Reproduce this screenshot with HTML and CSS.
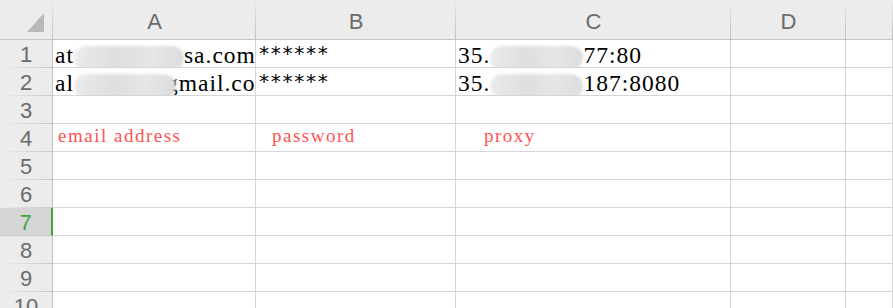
FILE: index.html
```html
<!DOCTYPE html>
<html lang="en">
<head>
  <meta charset="UTF-8">
  <title>Sheet1</title>
  <link rel="stylesheet" href="styles.css">
</head>
<body>

<div class="sheet">
  <div class="corner">
    <svg width="18" height="20" viewBox="0 0 18 20"><polygon points="17,0 17,19 0,19" fill="#b9b9b9"/></svg>
  </div>
  <div class="col-head">A</div>
  <div class="col-head">B</div>
  <div class="col-head">C</div>
  <div class="col-head">D</div>
  <div class="col-head"></div>

  <div class="row-head">1</div>
  <div class="cell">at<span class="blot blot-a1"></span>sa.com</div>
  <div class="cell stars">******</div>
  <div class="cell">35.<span class="blot blot-c1"></span>77:80</div>
  <div class="cell"></div>
  <div class="cell"></div>

  <div class="row-head">2</div>
  <div class="cell">al<span class="blot blot-a2"></span>gmail.com</div>
  <div class="cell stars">******</div>
  <div class="cell">35.<span class="blot blot-c2"></span>187:8080</div>
  <div class="cell"></div>
  <div class="cell"></div>

  <div class="row-head">3</div>
  <div class="cell"></div>
  <div class="cell"></div>
  <div class="cell"></div>
  <div class="cell"></div>
  <div class="cell"></div>

  <div class="row-head">4</div>
  <div class="cell note indent-a">email address</div>
  <div class="cell note indent-b">password</div>
  <div class="cell note indent-c">proxy</div>
  <div class="cell"></div>
  <div class="cell"></div>

  <div class="row-head">5</div>
  <div class="cell"></div>
  <div class="cell"></div>
  <div class="cell"></div>
  <div class="cell"></div>
  <div class="cell"></div>

  <div class="row-head">6</div>
  <div class="cell"></div>
  <div class="cell"></div>
  <div class="cell"></div>
  <div class="cell"></div>
  <div class="cell"></div>

  <div class="row-head active">7</div>
  <div class="cell"></div>
  <div class="cell"></div>
  <div class="cell"></div>
  <div class="cell"></div>
  <div class="cell"></div>

  <div class="row-head">8</div>
  <div class="cell"></div>
  <div class="cell"></div>
  <div class="cell"></div>
  <div class="cell"></div>
  <div class="cell"></div>

  <div class="row-head">9</div>
  <div class="cell"></div>
  <div class="cell"></div>
  <div class="cell"></div>
  <div class="cell"></div>
  <div class="cell"></div>

  <div class="row-head">10</div>
  <div class="cell"></div>
  <div class="cell"></div>
  <div class="cell"></div>
  <div class="cell"></div>
  <div class="cell"></div>
</div>

</body>
</html>
```

FILE: styles.css
```css
body {
  margin: 0;
  background-color: #fff;
  overflow: hidden;
}

.sheet {
  display: grid;
  grid-template-columns: 53px 203px 200px 275px 115px 1fr;
  grid-template-rows: 40px repeat(10, 28px);
  width: 893px;
  height: 308px;
  overflow: hidden;
}

.corner {
  background: linear-gradient(#ececec, #c2c2c2) right / 1px 100% no-repeat, #ececec;
  border-bottom: 1px solid #c2c2c2;
  box-sizing: border-box;
  display: flex;
  justify-content: flex-end;
  align-items: flex-end;
  padding: 0 8px 6px 0;
}

.corner svg {
  display: block;
}

.col-head {
  background: linear-gradient(#ececec, #bcbcbc) right / 1px 100% no-repeat, #ececec;
  border-bottom: 1px solid #c2c2c2;
  box-sizing: border-box;
  display: flex;
  justify-content: center;
  align-items: center;
  padding-top: 4px;
  font-family: "Liberation Sans", Arial, sans-serif;
  font-size: 22px;
  color: #6b6b6b;
}

.row-head {
  background: linear-gradient(to right, #ececec, #c8c8c8) bottom / 100% 1px no-repeat, #ececec;
  border-right: 1px solid #c2c2c2;
  box-sizing: border-box;
  display: flex;
  justify-content: center;
  align-items: center;
  padding-top: 2px;
  font-family: "Liberation Sans", Arial, sans-serif;
  font-size: 22px;
  color: #6b6b6b;
}

.row-head.active {
  background-color: #d6d6d6;
  background-image: none;
  border-bottom: 1px solid #c8c8c8;
  border-right: 2px solid #3ea83e;
  color: #3ea83e;
}

.cell {
  border-right: 1px solid #d6d6d6;
  border-bottom: 1px solid #d6d6d6;
  box-sizing: border-box;
  display: flex;
  align-items: flex-end;
  padding: 0 0 0 2px;
  overflow: hidden;
  white-space: nowrap;
  font-family: "Liberation Serif", "Times New Roman", serif;
  font-size: 23.5px;
  line-height: 24px;
  letter-spacing: 1px;
  color: #000;
}

.stars {
  font-family: "DejaVu Sans Mono", monospace;
  font-size: 20px;
  letter-spacing: -0.3px;
  padding-bottom: 2px;
}

.note {
  font-size: 19px;
  line-height: 19px;
  letter-spacing: 1.5px;
  color: #ff5252;
  padding-bottom: 6px;
}

.indent-a {
  padding-left: 5px;
}

.indent-b {
  padding-left: 16px;
}

.indent-c {
  padding-left: 28px;
}

.blot {
  display: inline-block;
  flex-shrink: 0;
  position: relative;
  z-index: 1;
  height: 24px;
  margin-bottom: -3px;
  border-radius: 12px;
  background: linear-gradient(to right, #ebebeb, #dedede 40%, #e6e6e6 70%, #dcdcdc);
  filter: blur(1.5px);
}

.blot-a1 {
  width: 110px;
}

.blot-a2 {
  width: 102px;
  margin-right: -10px;
}

.blot-c1 {
  width: 93px;
}

.blot-c2 {
  width: 93px;
}
```
